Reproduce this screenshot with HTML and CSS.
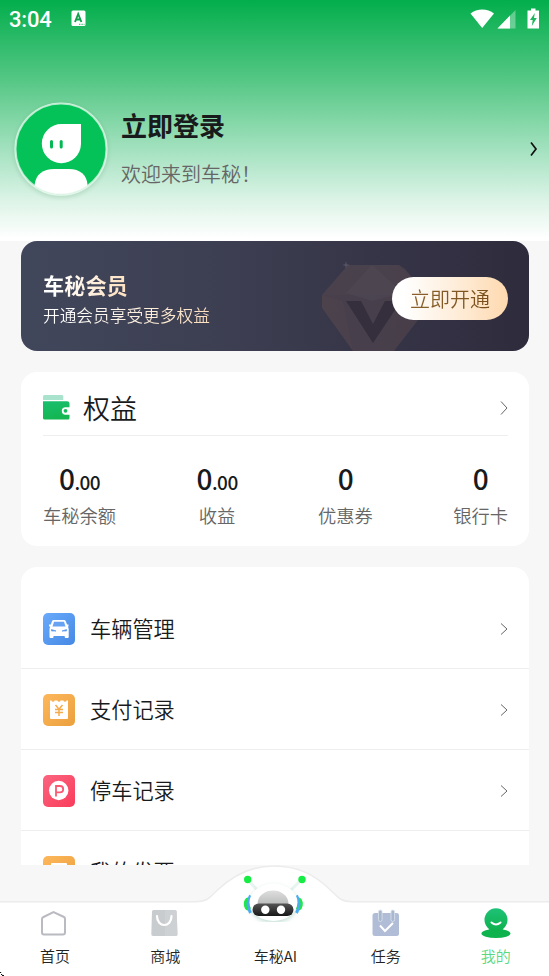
FILE: index.html
```
<!DOCTYPE html>
<html lang="zh-CN">
<head>
<meta charset="utf-8">
<title>我的</title>
<link rel="stylesheet" href="styles.css">
</head>
<body>
<div class="app">
  <header class="hero">
    <div class="status">
      <span class="time">3:04</span>
      <svg class="notice" width="15" height="17" viewBox="0 0 15 17"><rect x=".5" y=".5" width="14" height="15.500" rx="1.500" fill="#fff"/><path d="M4 12 7.200 4 10.400 12M5 9.500H9.400" fill="none" stroke="#10a04b" stroke-width="1.900"/><path d="M8 14.300h5.500" stroke="#2bb765" stroke-width="1" stroke-dasharray="1 .6"/></svg>
      <svg class="signals" width="70" height="21" viewBox="0 0 70 21"><path d="M.5 5.500C7 0 17.500 0 24 5.500L12.200 20Z" fill="#fff"/><path d="M45.500 2V20.500H27.500Z" fill="#fff" fill-opacity=".35"/><path d="M40 7.500V20.500H27.500Z" fill="#fff"/><path d="M57.500 2.500H61V.5h4.500v2H69V20.500H57.500Z" fill="#fff"/><path d="M64.800 5 60 12h2.700l-.9 6 5-8h-2.800Z" fill="#1eb65e"/></svg>
    </div>
    <div class="user">
      <svg class="avatar" width="94" height="94" viewBox="0 0 94 94"><defs><clipPath id="face"><circle cx="47" cy="47" r="45.500"/></clipPath></defs><circle cx="47" cy="47" r="45.500" fill="#04c257"/><path d="M47.500 22H67v20a19.600 19.600 0 1 1-19.500-20Z" fill="#fff"/><rect x="36" y="38" width="3" height="8.500" rx="1.500" fill="#04b954"/><rect x="45.700" y="38" width="3" height="8.500" rx="1.500" fill="#04b954"/><path clip-path="url(#face)" d="M20.500 94V83C22 72 29 67 40 67H55C66 67 73 73 73.500 83V94Z" fill="#fff"/><circle cx="47" cy="47" r="45.500" fill="none" stroke="#e9f8ef" stroke-opacity=".75" stroke-width="2"/></svg>
      <div class="user-text"><h1>立即登录</h1><p>欢迎来到车秘！</p></div>
      <svg class="user-arrow" width="8" height="16" viewBox="0 0 8 16"><path d="M1 1.500 6 8 1 14.500" fill="none" stroke="#111" stroke-width="1.700"/></svg>
    </div>
  </header>
  <main class="content">
    <section class="vip">
      <svg class="gem" width="122" height="110" viewBox="0 0 122 110"><path d="M29 24H80L86 28 107 53V66L102 75 75 110H34L3 67V54Z" fill="#4d434c" fill-opacity=".75"/><path d="M29 24 3 54H107L80 24Z" fill="#50464e" fill-opacity=".3"/><path d="M53 24 27 52 53 60 84 52Z" fill="#605b6b" fill-opacity=".2"/><path d="M3 54V67L34 110 24 60Z" fill="#5c4a4e" fill-opacity=".2"/><path d="M27 60H42L54 83 66 60H82L54 102Z" fill="#352e3c"/><path d="m27 20 .7 3.300 3.300.7-3.300.7L27 28l-.7-3.300L23 24l3.300-.7Z" fill="#898294" fill-opacity=".4"/></svg>
      <div class="vip-text"><h2>车秘会员</h2><p>开通会员享受更多权益</p></div>
      <button class="open"><span>立即开通</span></button>
    </section>
    <section class="rights">
      <div class="rights-head">
        <svg width="27" height="25" viewBox="0 0 27 25"><defs><linearGradient id="wallet" x2="0.300" y2="1"><stop stop-color="#1abf70"/><stop offset="1" stop-color="#13b651"/></linearGradient></defs><path d="M0 5V1.500Q0 0 1.500 0H19q1.300 0 1.300 1.500V5Z" fill="#aae3cd"/><path d="M0 6.300H24q2.500 0 2.500 2.200v3.800H22.500a3.700 3.700 0 0 0 0 7.400h4V23q0 1.500-1.500 1.500H1.500Q0 24.500 0 23Z" fill="url(#wallet)"/><circle cx="22.500" cy="15.800" r="1.900" fill="#16b95d"/></svg>
        <h2>权益</h2>
        <svg class="arrow" width="8" height="14" viewBox="0 0 8 14"><path d="M1 .5 7 7 1 13.500"/></svg>
      </div>
      <div class="stats">
        <div class="stat"><b>0<small>.00</small></b><span>车秘余额</span></div>
        <div class="stat"><b>0<small>.00</small></b><span>收益</span></div>
        <div class="stat"><b>0</b><span>优惠券</span></div>
        <div class="stat"><b>0</b><span>银行卡</span></div>
      </div>
    </section>
    <section class="menu">
      <div class="row">
        <svg class="tile blue" viewBox="0 0 32 32"><path d="M10.500 7H21q1.300 0 1.800 1.300L24 11.500h1.500v2H25l.7 2.500V24q0 1-1 1h-2q-1 0-1-1v-1H10.500v1q0 1-1 1h-2q-1 0-1-1v-8l.7-2.500H6v-2h1.800L9 8.300Q9.500 7 10.500 7Z" fill="#fff"/><path d="M11 8.800h10l1.500 4.700h-13Z" fill="#68a2f2"/><path d="M8.500 16.500 13 18H8.500ZM23.500 16.500 19 18h4.500Z" fill="#5998ef" stroke="#5998ef" stroke-width=".7"/></svg>
        <span>车辆管理</span><svg class="arrow" width="8" height="12" viewBox="0 0 8 12"><path d="M1 .5 7 6 1 11.500"/></svg>
      </div>
      <div class="row">
        <svg class="tile orange" viewBox="0 0 32 32"><path d="M7 6.500H8.500a1.500 1.200 0 0 0 3 0h3a1.500 1.200 0 0 0 3 0h3a1.500 1.200 0 0 0 3 0H25V24q0 1-1 1H8q-1 0-1-1Z" fill="#fff"/><path d="m12.500 11 3.500 4.200L19.500 11M12 15.500h8M12 18.500h8M16 15v7" fill="none" stroke="#f5aa4b" stroke-width="1.500"/></svg>
        <span>支付记录</span><svg class="arrow" width="8" height="12" viewBox="0 0 8 12"><path d="M1 .5 7 6 1 11.500"/></svg>
      </div>
      <div class="row">
        <svg class="tile red" viewBox="0 0 32 32"><circle cx="15.700" cy="15.500" r="9.700" fill="#fff"/><path d="M13 21.500V11h4a3.200 3.200 0 0 1 0 6.400h-4" fill="none" stroke="#fa5873" stroke-width="1.800"/></svg>
        <span>停车记录</span><svg class="arrow" width="8" height="12" viewBox="0 0 8 12"><path d="M1 .5 7 6 1 11.500"/></svg>
      </div>
      <div class="row">
        <svg class="tile orange" viewBox="0 0 32 32"><rect x="8" y="7" width="16" height="18" rx="1" fill="#fff"/></svg>
        <span>我的发票</span><svg class="arrow" width="8" height="12" viewBox="0 0 8 12"><path d="M1 .5 7 6 1 11.500"/></svg>
      </div>
    </section>
  </main>
  <nav class="tabs">
    <svg class="tabs-bg" width="549" height="111" viewBox="0 0 549 111"><path d="M-2 36.700H196C208 36.700 210 32 217 25.500C232 11 250 1 274 1C298 1 315 10 331 25.500C338 32 340 36.700 352 36.700H551V112H-2Z" fill="#fff" stroke="#ececec" stroke-width="1.500"/><path d="M0 107.500h1.200M1 109.500h1.200M2 110.500h2" stroke="#111"/></svg>
    <a class="tab"><svg width="34" height="34" viewBox="0 0 34 34"><path d="M5.500 10 15.500 5 26 10Q27 10.500 27 12V25.500Q27 27.500 25 27.500H6Q4 27.500 4 25.500V12Q4 10.500 5.500 10Z" fill="#fff" stroke="#babac1" stroke-width="2"/></svg><span>首页</span></a>
    <a class="tab"><svg width="34" height="34" viewBox="0 0 34 34"><path d="M5.500 3H27q1.600 0 1.700 1.500l.8 23Q29.500 29 27.500 29H5Q3.200 29 3.300 27L4 4.500Q4 3 5.500 3Z" fill="#c9cccf"/><path d="M17 3h10q1.600 0 1.700 1.500l.8 23Q29.500 29 27.500 29H17Z" fill="#d2d4d6" fill-opacity=".6"/><path d="M9 9c0 12 14.500 12 14.500 0" fill="none" stroke="#fff" stroke-width="2.200" stroke-linecap="round"/></svg><span>商城</span></a>
    <a class="tab"><svg class="robot" width="70" height="60" viewBox="0 0 70 60"><defs><linearGradient id="dome" x2="0" y2="1"><stop stop-color="#dedede"/><stop offset="1" stop-color="#bcbdbd"/></linearGradient><linearGradient id="visor" x2="0" y2="1"><stop stop-color="#555"/><stop offset="1" stop-color="#171717"/></linearGradient></defs><path d="m9 19 9 10M60 19 50 29" stroke="#e7f4f0" stroke-width="3"/><circle cx="7.700" cy="17.500" r="3.700" fill="#16ec43"/><circle cx="62" cy="17.500" r="3.700" fill="#16ec43"/><ellipse cx="7.800" cy="42" rx="4" ry="6.500" fill="#1ee945"/><ellipse cx="58.800" cy="42" rx="4" ry="6.500" fill="#1ee945"/><path d="M10.500 33.500q-5 8.500 0 17.500M56.500 33.500q5 8.500 0 17.500" fill="none" stroke="#4eaff8" stroke-width="3"/><ellipse class="head" cx="33.500" cy="40.300" rx="24" ry="18.700"/><path d="M17.500 42C18 24 48 24 48.500 42Z" fill="url(#dome)"/><rect x="12.500" y="41.500" width="41" height="12.500" rx="6.250" fill="url(#visor)"/><circle cx="25.300" cy="47.700" r="4.200" fill="#fff"/><circle cx="41" cy="47.700" r="4.200" fill="#fff"/></svg><span>车秘AI</span></a>
    <a class="tab"><svg width="34" height="34" viewBox="0 0 34 34"><rect x="3.500" y="6" width="26.500" height="23" rx="2.500" fill="#b1bdd6"/><rect x="9.500" y="3" width="3.600" height="11.500" rx="1.800" fill="#a9b7cf" stroke="#dce3ee" stroke-width=".8"/><rect x="22" y="3" width="3.600" height="11.500" rx="1.800" fill="#a9b7cf" stroke="#dce3ee" stroke-width=".8"/><path d="m11 18.500 5 5.500 8-8" fill="none" stroke="#fff" stroke-width="2"/></svg><span>任务</span></a>
    <a class="tab active"><svg width="34" height="34" viewBox="0 0 34 34"><defs><linearGradient id="person" x2="0" y2="1"><stop stop-color="#1ec277"/><stop offset="1" stop-color="#0eb14b"/></linearGradient></defs><ellipse cx="17" cy="26.500" rx="14.500" ry="4.500" fill="#0eb34e"/><path d="M8 23.500Q11 22.500 10.500 21H23.500Q23 22.500 26 23.500Z" fill="#11b553"/><circle cx="17" cy="12.800" r="11.500" fill="url(#person)"/><path d="M12.500 15.500c2.700 2.400 6.300 2.400 9 0" fill="none" stroke="#fff" stroke-width="2" stroke-linecap="round"/></svg><span>我的</span></a>
  </nav>
</div>
</body>
</html>
```
FILE: styles.css
```
* { box-sizing: border-box; }
body, h1, h2, p { margin: 0; }
body { font-family: "Noto Sans CJK SC", sans-serif; font-weight: 350; color: #181a1b; }
svg { display: block; flex: none; }
.app { width: 549px; height: 976px; display: flex; flex-direction: column; background: #f7f7f7; overflow: hidden; }
.hero { height: 241px; flex: none; background: linear-gradient(#02ae4b 0, #28b966 15%, #52c683 32%, #75d29c 45%, #abe4c5 65%, #def4e8 84%, #fff 99%); }
.status { height: 37px; display: flex; align-items: center; padding: 0 9px; color: #fff; }
.time { width: 62px; font: 500 22px/37px Roboto, sans-serif; letter-spacing: -.2px; padding-top: 1px; }
.signals { margin-left: auto; }
.user { height: 222px; display: flex; align-items: center; padding: 0 11px 0 13.500px; }
.avatar { margin-top: 1px; border-radius: 50%; box-shadow: 0 2px 4px rgba(0, 90, 30, .14); }
.user-text { margin: -3px 0 0 13.500px; }
.user-text h1 { font-size: 26px; line-height: 38px; font-weight: 700; }
.user-text p { margin-top: 16px; font-size: 20px; line-height: 28px; color: #666; }
.user-arrow { margin: 2px 0 0 auto; }
.content { height: 624px; flex: none; padding: 0 20px 0 21px; overflow: hidden; }
.vip { position: relative; height: 110px; display: flex; align-items: center; justify-content: space-between; padding: 6px 21px 0 22px; border-radius: 16px; overflow: hidden; background: linear-gradient(90deg, #41475b, #3c3d50 45%, #2e2b3c); }
.gem { position: absolute; left: 298px; top: 0; }
.vip h2, .vip p { width: fit-content; background: linear-gradient(100deg, #fff 15%, #fee0bd); background-clip: text; color: transparent; }
.vip h2 { margin-top: -1px; font-size: 21.200px; line-height: 31px; font-weight: 700; }
.vip p { margin-top: 1px; font-size: 16.700px; line-height: 28px; }
.open { position: relative; width: 116px; height: 43px; margin-top: -1px; padding: 1px 0 0; border: 0; border-radius: 22px; background: linear-gradient(90deg, #fff 10%, #feebd5 60%, #fed9af); font: 350 20px/42px "Noto Sans CJK SC", sans-serif; }
.open span { background: linear-gradient(90deg, #8b622e, #79501b); background-clip: text; color: transparent; }
.rights { height: 174px; margin-top: 21px; padding: 0 21px 0 22px; border-radius: 16px; background: #fff; }
.rights-head { height: 64px; display: flex; align-items: center; border-bottom: 1px solid #eee; padding-top: 8px; }
.rights-head h2 { margin-left: 13px; font-size: 27px; line-height: 40px; font-weight: 350; }
.arrow { margin-left: auto; fill: none; stroke: #666; stroke-width: 1; }
.stats { display: flex; justify-content: space-between; padding-top: 25px; }
.stat { display: flex; flex-direction: column; align-items: center; }
.stat b { height: 35px; font-size: 28px; line-height: 35px; font-weight: 500; letter-spacing: -.5px; }
.stat small { font-size: 19px; }
.stat span { margin-top: 5px; font-size: 18.300px; line-height: 28px; color: #666; }
.menu { height: 450px; margin-top: 21px; padding-top: 21px; border-radius: 16px; background: #fff; }
.row { height: 81px; display: flex; align-items: center; padding: 1px 21px 0 22px; border-bottom: 1px solid #eee; font-size: 21.200px; line-height: 32px; }
.row span { margin-top: -2px; }
.tile { width: 32px; height: 32px; margin-right: 15px; border-radius: 5px; }
.blue { background: linear-gradient(135deg, #69aafb, #4689e4); }
.orange { background: linear-gradient(135deg, #fdb75b, #eba03e); }
.red { background: linear-gradient(135deg, #fb6580, #f93c5a); }
.tabs { position: relative; height: 111px; display: flex; padding-top: 42px; }
.tabs-bg { position: absolute; left: 0; top: 0; }
.tab { position: relative; width: 110.200px; flex: none; display: flex; flex-direction: column; align-items: center; font-size: 15px; line-height: 22px; color: #222; }
.tab span { margin-top: 4px; }
.robot { margin-top: -45px; margin-bottom: 19px; }
.head { fill: #fff; filter: drop-shadow(0 2px 2px rgba(60, 150, 120, .3)); }
.active { color: #5bd881; }
```
